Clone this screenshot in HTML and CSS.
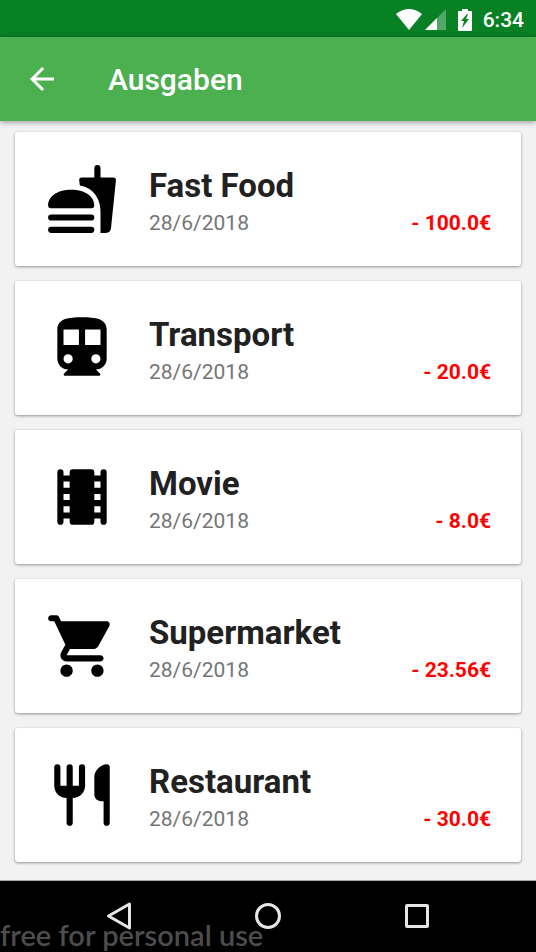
FILE: index.html
```html
<!DOCTYPE html>
<html lang="de">
<head>
<meta charset="utf-8">
<meta name="viewport" content="width=device-width, initial-scale=1">
<title>Ausgaben</title>
<link rel="stylesheet" href="styles.css">
</head>
<body>
<div class="status-bar">
  <svg class="status-wifi" width="26" height="21" viewBox="0 0 26 21" aria-hidden="true"><path d="M0 5Q13-5 26 5L13 21Z"/></svg>
  <svg class="status-signal" width="21" height="21" viewBox="0 0 21 21" aria-hidden="true"><path opacity=".3" d="M0 21 21 0V21Z"/><path d="M0 21 12 9V21Z"/></svg>
  <svg class="status-battery" width="14" height="22" viewBox="0 0 14 22" aria-hidden="true"><path fill-rule="evenodd" d="M4 0h6v2h3a1 1 0 0 1 1 1v18a1 1 0 0 1-1 1H1a1 1 0 0 1-1-1V3a1 1 0 0 1 1-1h3ZM9 5l-6 7h3l-2 7 7-9H8l2-5Z"/></svg>
  <time class="status-time">6:34</time>
</div>
<header class="app-bar">
  <button class="back" type="button" aria-label="Zurück">
    <svg width="36" height="36" viewBox="0 0 24 24" aria-hidden="true"><path d="M20 11H7.830l5.590-5.590L12 4l-8 8 8 8 1.410-1.410L7.830 13H20v-2z"/></svg>
  </button>
  <h1 class="app-title">Ausgaben</h1>
</header>
<main class="expenses">
  <article class="card">
    <svg class="card-icon" viewBox="0 0 24 24" aria-hidden="true"><path d="M16 5V2a1 1 0 0 1 2 0v3h4.100a.9.9 0 0 1 .9 1L21.400 21.500A1.700 1.700 0 0 1 19.700 23H18v-7C18 11.200 15 8.200 11.300 7.600L11.100 6A.9.9 0 0 1 12 5ZM1 14.200C1 10.800 4.500 9 8.500 9S16 10.800 16 14.200a.8.8 0 0 1-.8.8H1.800a.8.8 0 0 1-.8-.8ZM2 17h13a1 1 0 0 1 0 2H2a1 1 0 0 1 0-2ZM2 21h13a1 1 0 0 1 0 2H2a1 1 0 0 1 0-2Z"/></svg>
    <div class="card-body">
      <h2 class="card-title">Fast Food</h2>
      <div class="card-meta"><span class="date">28/6/2018</span><span class="amount">- 100.0€</span></div>
    </div>
  </article>
  <article class="card">
    <svg class="card-icon" viewBox="0 0 24 24" aria-hidden="true"><path fill-rule="evenodd" d="M12 2c-4.420 0-8 .5-8 4v9.500C4 17.430 5.570 19 7.500 19L6.200 20.300c-.3.3-.1.7.2.7h11.200c.3 0 .5-.4.2-.7L16.500 19c1.930 0 3.500-1.570 3.500-3.500V6c0-3.500-3.580-4-8-4ZM7.500 17a1.500 1.500 0 1 1 0-3 1.500 1.500 0 0 1 0 3ZM11 11H6V6h5ZM16.500 17a1.500 1.500 0 1 1 0-3 1.500 1.500 0 0 1 0 3ZM18 11h-5V6h5Z"/></svg>
    <div class="card-body">
      <h2 class="card-title">Transport</h2>
      <div class="card-meta"><span class="date">28/6/2018</span><span class="amount">- 20.0€</span></div>
    </div>
  </article>
  <article class="card">
    <svg class="card-icon" viewBox="0 0 24 24" aria-hidden="true"><path fill-rule="evenodd" d="M4 4a1 1 0 0 1 2 0v1h2V4a1 1 0 0 1 1-1h6a1 1 0 0 1 1 1v1h2V4a1 1 0 0 1 2 0v16a1 1 0 0 1-2 0v-1h-2v1a1 1 0 0 1-1 1H9a1 1 0 0 1-1-1v-1H6v1a1 1 0 0 1-2 0ZM6 7v2h2V7ZM6 11v2h2v-2ZM6 15v2h2v-2ZM16 7v2h2V7ZM16 11v2h2v-2ZM16 15v2h2v-2Z"/></svg>
    <div class="card-body">
      <h2 class="card-title">Movie</h2>
      <div class="card-meta"><span class="date">28/6/2018</span><span class="amount">- 8.0€</span></div>
    </div>
  </article>
  <article class="card">
    <svg class="card-icon" viewBox="0 0 24 24" aria-hidden="true"><path d="M7 18c-1.100 0-1.990.9-1.990 2S5.900 22 7 22s2-.9 2-2-.9-2-2-2zM1 3c0 .55.45 1 1 1h1l3.600 7.590-1.350 2.440C4.520 15.370 5.480 17 7 17h11c.55 0 1-.45 1-1s-.45-1-1-1H7l1.100-2h7.450c.75 0 1.410-.41 1.750-1.030l3.580-6.490c.37-.66-.11-1.480-.87-1.480H5.210l-.67-1.430c-.16-.35-.52-.57-.9-.57H2c-.55 0-1 .45-1 1zm16 15c-1.100 0-1.990.9-1.990 2s.89 2 1.990 2 2-.9 2-2-.9-2-2-2z"/></svg>
    <div class="card-body">
      <h2 class="card-title">Supermarket</h2>
      <div class="card-meta"><span class="date">28/6/2018</span><span class="amount">- 23.56€</span></div>
    </div>
  </article>
  <article class="card">
    <svg class="card-icon" viewBox="0 0 24 24" aria-hidden="true"><path d="M3 3a1 1 0 0 1 2 0v6h2V3a1 1 0 0 1 2 0v6h2V3a1 1 0 0 1 2 0v6c0 2.200-1.800 4-4 4v8a1 1 0 0 1-2 0v-8c-2.200 0-4-1.800-4-4ZM16 6c0-2 2.300-4 4-4a1 1 0 0 1 1 1v18a1 1 0 0 1-2 0v-7h-1a2 2 0 0 1-2-2Z"/></svg>
    <div class="card-body">
      <h2 class="card-title">Restaurant</h2>
      <div class="card-meta"><span class="date">28/6/2018</span><span class="amount">- 30.0€</span></div>
    </div>
  </article>
</main>
<nav class="nav-bar" aria-label="System">
  <button class="nav-button" type="button" aria-label="Zurück"><svg width="30" height="30" viewBox="0 0 30 30" aria-hidden="true"><path d="M25.500 3V27L4.500 15Z"/></svg></button>
  <button class="nav-button" type="button" aria-label="Startseite"><svg width="30" height="30" viewBox="0 0 30 30" aria-hidden="true"><circle cx="15" cy="15" r="11.500"/></svg></button>
  <button class="nav-button" type="button" aria-label="Übersicht"><svg width="30" height="30" viewBox="0 0 30 30" aria-hidden="true"><rect x="4.500" y="4.500" width="21" height="21" rx=".5"/></svg></button>
  <span class="watermark">free for personal use</span>
</nav>
</body>
</html>
```
FILE: styles.css
```css
* {
  box-sizing: border-box;
}

body {
  margin: 0;
  min-height: 100vh;
  display: flex;
  flex-direction: column;
  background: #f2f2f2;
  color: #212121;
  font-family: Roboto, sans-serif;
}

h1,
h2 {
  margin: 0;
}

button {
  padding: 0;
  border: 0;
  background: none;
}

svg {
  display: block;
}

.status-bar {
  display: flex;
  justify-content: flex-end;
  align-items: center;
  height: 37px;
  padding: 2px 12px 0;
  background: #088024;
  color: #fff;
  fill: #fff;
}

.status-signal {
  margin-left: 3px;
}

.status-battery {
  margin: 0 11px 0 12px;
}

.status-time {
  font-size: 21px;
  font-weight: 500;
  line-height: 24px;
}

.app-bar {
  display: flex;
  align-items: center;
  gap: 48px;
  height: 84px;
  padding: 0 24px;
  background: #4caf50;
  color: #fff;
  box-shadow: 0 1px 6px rgba(0, 0, 0, 0.4);
  z-index: 1;
}

.back {
  fill: #fff;
}

.app-title {
  padding-top: 2px;
  font-size: 30px;
  font-weight: 500;
  line-height: 36px;
}

.expenses {
  flex: 1;
  display: flex;
  flex-direction: column;
  gap: 15px;
  padding: 11px 15px 18px;
}

.card {
  display: flex;
  gap: 30px;
  padding: 30px 30px 26px;
  border-radius: 3px;
  background: #fff;
  box-shadow: 0 1px 3px rgba(0, 0, 0, 0.4);
}

.card-icon {
  flex: none;
  width: 74px;
  height: 74px;
}

.card-body {
  flex: 1;
  padding-top: 4px;
}

.card-title {
  font-size: 33px;
  font-weight: 700;
  line-height: 40px;
}

.card-meta {
  display: flex;
  justify-content: space-between;
  font-size: 21px;
  line-height: 34px;
}

.date {
  color: #757575;
}

.amount {
  color: #f00;
  font-weight: 700;
}

.nav-bar {
  position: relative;
  display: flex;
  justify-content: center;
  gap: 119px;
  height: 72px;
  padding-bottom: 2px;
  border-top: 1px solid #aaa;
  background: #000;
}

.nav-button {
  width: 30px;
  fill: none;
  stroke: #e6e6e6;
  stroke-width: 3;
  stroke-linejoin: round;
}

.watermark {
  position: absolute;
  left: 0;
  bottom: 0;
  color: #4d4d4d;
  font-family: Lato, sans-serif;
  font-size: 29px;
  font-weight: 600;
  line-height: 34px;
  pointer-events: none;
}
```
